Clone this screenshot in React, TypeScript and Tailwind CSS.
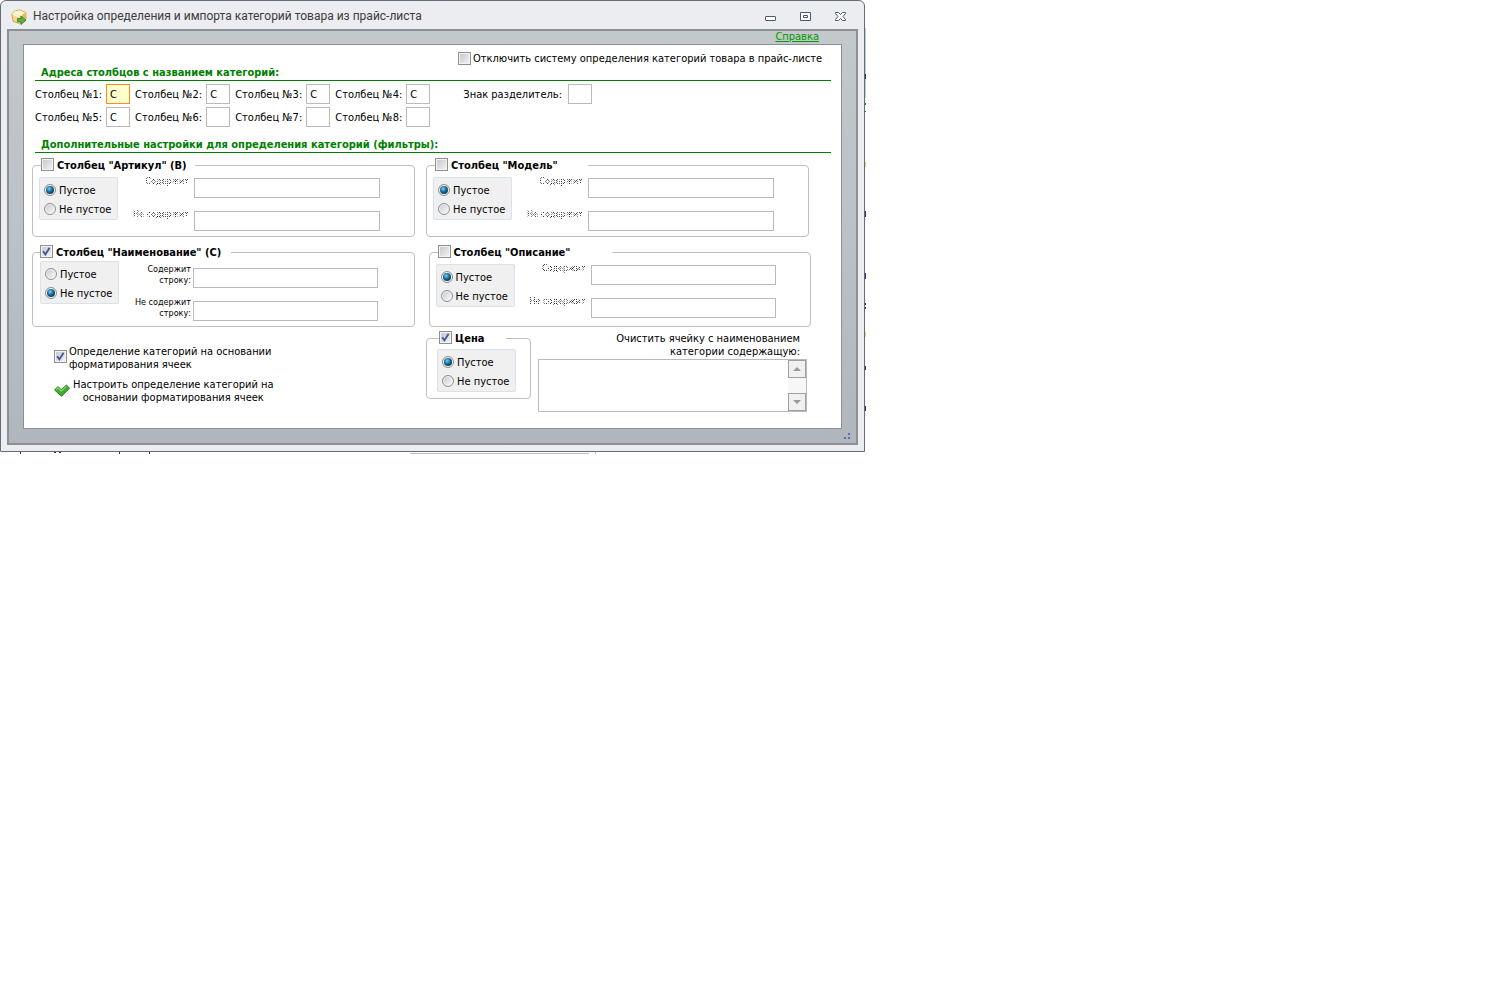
import React, { useId } from "react";

const font = "font-['DejaVu_Sans_Condensed','DejaVu_Sans',sans-serif]";

function Check({ checked }: { checked?: boolean }) {
  return (
    <span className="grid size-[13px] shrink-0">
      <input
        type="checkbox"
        defaultChecked={checked}
        className="peer col-start-1 row-start-1 size-[13px] appearance-none border border-[#8e8f8f] bg-linear-to-br from-[#c3c6cb] to-[#f4f5f6] shadow-[inset_0_0_0_1px_#f4f4f4]"
      />
      <svg viewBox="0 0 13 13" className="pointer-events-none col-start-1 row-start-1 hidden size-[13px] peer-checked:block">
        <path d="M3.2 6.2 5.400 9.400 9.600 2.800" fill="none" stroke="#4257a0" strokeWidth="1.9" />
      </svg>
    </span>
  );
}

function Radio({ name, label, checked }: { name: string; label: string; checked?: boolean }) {
  return (
    <label className="flex h-[19px] items-start gap-[3px] pt-[3px]">
      <span className="grid size-3 shrink-0">
        <input
          type="radio"
          name={name}
          defaultChecked={checked}
          className="peer col-start-1 row-start-1 size-3 appearance-none rounded-full border border-[#8e8f8f] bg-linear-to-br from-[#c3c6cb] to-white shadow-[inset_0_0_0_1px_#f4f4f4]"
        />
        <span className="pointer-events-none col-start-1 row-start-1 m-[2px] hidden rounded-full bg-[radial-gradient(circle_at_40%_35%,#7fd3f2_0,#1b6f9e_40%,#0b2c49_85%)] peer-checked:block" />
      </span>
      {label}
    </label>
  );
}

function RadioBox({ empty }: { empty: boolean }) {
  const name = useId();
  return (
    <div className="h-[43px] w-[79px] shrink-0 rounded-[2px] border border-[#d9e2ec] bg-[#f0f0f0] pt-[3px] pl-1">
      <Radio name={name} label="Пустое" checked={empty} />
      <Radio name={name} label="Не пустое" checked={!empty} />
    </div>
  );
}

function Legend({ title, checked, className }: { title: string; checked?: boolean; className: string }) {
  return (
    <legend className={className}>
      <label className="flex h-[14px] items-start gap-[3px] font-bold whitespace-nowrap">
        <Check checked={checked} />
        <span className="pt-px">{title}</span>
      </label>
    </legend>
  );
}

function Filter({ title, legend, enabled, height }: { title: string; legend: string; enabled?: boolean; height: string }) {
  const a = useId();
  const b = useId();
  const text = enabled
    ? "leading-[11px]"
    : "leading-[9px] bg-[repeating-conic-gradient(#000_0_25%,transparent_0_50%)] bg-[length:2px_2px] bg-clip-text text-transparent";
  const box = "h-5 w-full border border-[#bababa] bg-white px-1 outline-none";
  return (
    <fieldset className={`min-w-0 flex-1 rounded-[4px] border border-[#c0c0c0] ${height}`}>
      <Legend title={title} checked={enabled} className={legend} />
      <div className={`flex ${enabled ? "pt-[2px] pl-[7px]" : "pt-[5px] pl-[6px]"}`}>
        <RadioBox empty={!enabled} />
        <div className={`shrink-0 ${enabled ? "w-[72px] pt-[3px]" : "w-[71px]"}`}>
          <label htmlFor={a} className={`block h-[33px] text-right text-[9px] ${text}`}>
            Содержит
            {enabled && <><br />строку:</>}
          </label>
          <label htmlFor={b} className={`block h-[33px] text-right text-[9px] ${text}`}>
            Не содержит
            {enabled && <><br />строку:</>}
          </label>
        </div>
        <div className={`flex min-w-0 flex-1 flex-col gap-[13px] ${enabled ? "pt-[7px] pr-9 pl-[2px]" : "pt-px pr-[34px] pl-[5px]"}`}>
          <input id={a} className={box} />
          <input id={b} className={box} />
        </div>
      </div>
    </fieldset>
  );
}

function Column({ n, value, active }: { n: number; value: string; active?: boolean }) {
  return (
    <label className="flex items-center gap-[4px] whitespace-nowrap">
      <span>Столбец №{n}:</span>
      <input
        defaultValue={value}
        className={`h-5 w-6 border px-[3px] outline-none ${active ? "border-[#ff8c1a] bg-[#ffffcc]" : "border-[#bababa] bg-white"}`}
      />
    </label>
  );
}

function Heading({ children }: { children: React.ReactNode }) {
  return (
    <h2 className="mr-[10px] ml-[11px] h-[15px] border-b border-[#008000] pl-[6px] font-bold text-[#008000]">{children}</h2>
  );
}

function BoxIcon() {
  return (
    <svg viewBox="0 0 16 16" className="size-4 shrink-0">
      <path d="M.8 5 3.500 2.200 8.500.8 14.800 3.500 15 10.500 8.500 14.800 2 12.200z" fill="#f6d68c" stroke="#c8963a" strokeWidth=".8" />
      <path d="M1 5 3.700 2.500 8.500 1.200l6 2.500L8 7.500z" fill="#fdf1c4" />
      <path d="M8 7.600 14.600 4v6.500L8.400 14.400z" fill="#e9b857" />
      <path d="M4 2.500l6.500 3v3M1.500 5.200 8 7.800v6.500" fill="none" stroke="#fffbe8" strokeWidth="1.100" />
      <path d="M6.500 9.500H10V7l5 4.200-5 4.300V13H6.500z" fill="#5fae3c" stroke="#2f7a26" strokeWidth=".8" />
    </svg>
  );
}

function WindowButtons() {
  const cls = "grid h-4 w-[35px] place-items-center";
  const ink = { fill: "#fff", stroke: "#50566a" };
  return (
    <div className="flex pt-[3px]">
      <button aria-label="Свернуть" className={cls}>
        <svg viewBox="0 0 12 12" className="size-3"><rect x=".5" y="5.500" width="10" height="4" rx=".5" {...ink} /></svg>
      </button>
      <button aria-label="Развернуть" className={cls}>
        <svg viewBox="0 0 12 12" className="size-3"><path d="M.5 1.500h10v8H.5z" {...ink} /><path d="M3.500 4.500h4v2h-4z" {...ink} /></svg>
      </button>
      <button aria-label="Закрыть" className={cls}>
        <svg viewBox="0 0 12 12" className="size-3"><path d="M.5 1.500h3l2 2 2-2h3v1L8 5.500l2.500 3v1h-3l-2-2-2 2h-3v-1L3 5.500l-2.500-3z" {...ink} /></svg>
      </button>
    </div>
  );
}

function Scroll() {
  const b = "grid h-[18px] w-[18px] place-items-center border border-[#a0a0a0] bg-[#f0f0f0]";
  return (
    <div className="flex shrink-0 flex-col justify-between bg-[#f7f7f7]">
      <button aria-label="Вверх" className={b}><svg viewBox="0 0 8 4" className="h-1 w-2"><path d="M0 4 4 0l4 4z" fill="#999" /></svg></button>
      <button aria-label="Вниз" className={b}><svg viewBox="0 0 8 4" className="h-1 w-2"><path d="M0 0h8L4 4z" fill="#999" /></svg></button>
    </div>
  );
}

export default function App() {
  return (
    <div className={`min-h-screen bg-white text-[11px] leading-[13px] text-black ${font}`}>
      <div className="flex">
        <main className="flex w-full max-w-[865px] flex-col rounded-t-[6px] border border-[#666c78] bg-[#ebedf0] px-[6px] pb-[6px]">
          <header className="flex h-7 items-center justify-between">
            <h1 className="flex items-center gap-[6px] pt-[3px] pl-1 font-[Roboto,sans-serif] text-[12px] text-[#3b3b3b]">
              <BoxIcon />
              Настройка определения и импорта категорий товара из прайс-листа
            </h1>
            <WindowButtons />
          </header>
          <div className="border-2 border-[#8c8f93] bg-linear-to-b from-[#c3c8cb] via-[#bcc0c8] to-[#b1b5be]">
            <div className="flex h-[13px] justify-end pr-[37px]">
              <a href="#help" className="leading-[11px] text-[#009900] underline">Справка</a>
            </div>
            <section className="mx-[14px] border border-[#8c8f93] bg-white">
              <div className="flex h-[21px] justify-end pt-[6px] pr-[19px]">
                <label className="flex items-center gap-[2px]"><Check />Отключить систему определения категорий товара в прайс-листе</label>
              </div>
              <Heading>Адреса столбцов с названием категорий:</Heading>
              <div className="flex gap-[33px] pt-[3px] pb-[11px] pl-[11px]">
                <div className="grid grid-cols-[repeat(4,auto)] justify-items-end gap-x-[5px] gap-y-[3px]">
                  <Column n={1} value="C" active />
                  <Column n={2} value="C" />
                  <Column n={3} value="C" />
                  <Column n={4} value="C" />
                  <Column n={5} value="C" />
                  <Column n={6} value="" />
                  <Column n={7} value="" />
                  <Column n={8} value="" />
                </div>
                <label className="flex h-5 items-center gap-[6px]">
                  Знак разделитель:
                  <input className="h-5 w-6 border border-[#bababa] px-[3px] outline-none" />
                </label>
              </div>
              <Heading>Дополнительные настройки для определения категорий (фильтры):</Heading>
              <div className="flex gap-[11px] pt-[5px] pr-8 pl-2">
                <Filter title={'Столбец "Артикул" (B)'} legend="ml-2 w-[154px]" height="h-[79px]" />
                <Filter title={'Столбец "Модель"'} legend="ml-2 w-[153px]" height="h-[79px]" />
              </div>
              <div className="flex gap-[14px] pt-2 pr-[30px] pl-2">
                <Filter title={'Столбец "Наименование" (C)'} legend="ml-[7px] w-[191px]" height="h-[82px]" enabled />
                <Filter title={'Столбец "Описание"'} legend="ml-2 w-[174px]" height="h-[82px]" />
              </div>
              <div className="flex pt-1 pr-[34px] pb-4 pl-[30px]">
                <div className="w-[372px] shrink-0 pt-[14px]">
                  <label className="flex items-center gap-[2px]">
                    <span className="pb-[3px]"><Check checked /></span>
                    <span>Определение категорий на основании<br />форматирования ячеек</span>
                  </label>
                  <button className="mt-[7px] flex items-center gap-[3px] text-center">
                    <svg viewBox="0 0 16 16" className="mb-[3px] size-4">
                      <path d="M.6 8 3.800 4.600 7.200 7.600 12.400 3 15.500 6.200 7.600 14.300z" fill="#3fae2a" stroke="#1f6f1a" strokeWidth=".9" />
                      <path d="M2 7.800 3.900 5.900 7.200 9 12.300 4.400" fill="none" stroke="#8fdc6a" strokeWidth="1.200" />
                    </svg>
                    <span>Настроить определение категорий на<br />основании форматирования ячеек</span>
                  </button>
                </div>
                <fieldset className="h-[68px] w-[105px] shrink-0 rounded-[4px] border border-[#c0c0c0]">
                  <Legend title="Цена" checked className="ml-3 w-[67px]" />
                  <div className="pt-1 pl-[10px]"><RadioBox empty /></div>
                </fieldset>
                <div className="min-w-0 flex-1 pt-px pl-[7px]">
                  <label htmlFor="clear" className="block pr-[7px] text-right">Очистить ячейку с наименованием<br />категории содержащую:</label>
                  <div className="mt-px flex h-[53px] border border-[#bababa]">
                    <textarea id="clear" className="min-w-0 flex-1 resize-none p-1 outline-none" />
                    <Scroll />
                  </div>
                </div>
              </div>
            </section>
            <div className="flex h-[14px] items-center justify-end pr-[6px]">
              <svg viewBox="0 0 6 6" className="size-[6px]"><path d="M4 0h2v2H4zM0 4h2v2H0zM4 4h2v2H4z" fill="#4a78b0" /></svg>
            </div>
          </div>
        </main>
        <svg aria-hidden="true" viewBox="0 0 1 452" className="h-[452px] w-px shrink-0">
          <path d="M0 28h1v70H0z" fill="#c3cbd6" />
          <path d="M0 74h1v5H0zM0 211h1v6H0zM0 273h1v6H0zM0 303h1v2H0zM0 307h1v2H0zM0 366h1v4H0zM0 406h1v5H0z" fill="#2b2f6b" />
          <path d="M0 103h1v2H0zM0 111h1v1H0z" fill="#009900" />
          <path d="M0 162h1v5H0zM0 332h1v5H0z" fill="#e8cf70" />
        </svg>
      </div>
      <svg aria-hidden="true" viewBox="0 0 600 3" className="h-[3px] w-[600px]">
        <path d="M20 0h1v2h-1zM54 0h2v1h-2zM59 0h2v1h-2zM119 0h1v2h-1zM149 0h1v2h-1z" fill="#2b2f6b" />
        <path d="M410 1h179v1H410zM595 0h1v2h-1z" fill="#c0c0c0" />
      </svg>
    </div>
  );
}
